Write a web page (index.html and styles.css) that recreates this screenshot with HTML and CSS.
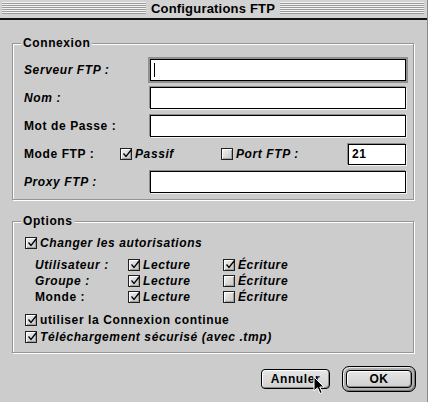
FILE: index.html
```html
<!DOCTYPE html>
<html lang="fr">
<head>
<meta charset="utf-8">
<title>Configurations FTP</title>
<link rel="stylesheet" href="styles.css">
</head>
<body>
<div class="window">
  <div class="titlebar">
    <div class="stripes"></div>
    <div class="title">Configurations FTP</div>
    <div class="stripes"></div>
  </div>
  <div class="content">
    <section class="group connexion">
      <div class="group-title">Connexion</div>
      <div class="row"><span class="lbl it">Serveur FTP :</span><div class="field focus"><span class="caret"></span></div></div>
      <div class="row"><span class="lbl it">Nom :</span><div class="field"></div></div>
      <div class="row"><span class="lbl">Mot de Passe :</span><div class="field"></div></div>
      <div class="row">
        <span class="lbl mode">Mode FTP :</span>
        <span class="check passif"><span class="cb"><svg viewBox="0 0 10 10" width="10" height="10"><path d="M1.5 4.5 L4 7.5 L9.5 0.5" stroke="#000" stroke-width="1.3" fill="none"/></svg></span><span class="it">Passif</span></span>
        <span class="check port"><span class="cb"></span><span class="it">Port FTP :</span></span>
        <div class="field small"><span class="val">21</span></div>
      </div>
      <div class="row"><span class="lbl it">Proxy FTP :</span><div class="field"></div></div>
    </section>

    <section class="group options">
      <div class="group-title">Options</div>
      <div class="orow"><span class="cb"><svg viewBox="0 0 10 10" width="10" height="10"><path d="M1.5 4.5 L4 7.5 L9.5 0.5" stroke="#000" stroke-width="1.3" fill="none"/></svg></span><span class="it">Changer les autorisations</span></div>
      <div class="perms">
        <div class="prow">
          <span class="plbl it">Utilisateur :</span>
          <span class="pcell"><span class="cb"><svg viewBox="0 0 10 10" width="10" height="10"><path d="M1.5 4.5 L4 7.5 L9.5 0.5" stroke="#000" stroke-width="1.3" fill="none"/></svg></span><span class="it">Lecture</span></span>
          <span class="pcell"><span class="cb"><svg viewBox="0 0 10 10" width="10" height="10"><path d="M1.5 4.5 L4 7.5 L9.5 0.5" stroke="#000" stroke-width="1.3" fill="none"/></svg></span><span class="it">Écriture</span></span>
        </div>
        <div class="prow">
          <span class="plbl it">Groupe :</span>
          <span class="pcell"><span class="cb"><svg viewBox="0 0 10 10" width="10" height="10"><path d="M1.5 4.5 L4 7.5 L9.5 0.5" stroke="#000" stroke-width="1.3" fill="none"/></svg></span><span class="it">Lecture</span></span>
          <span class="pcell"><span class="cb"></span><span class="it">Écriture</span></span>
        </div>
        <div class="prow">
          <span class="plbl">Monde :</span>
          <span class="pcell"><span class="cb"><svg viewBox="0 0 10 10" width="10" height="10"><path d="M1.5 4.5 L4 7.5 L9.5 0.5" stroke="#000" stroke-width="1.3" fill="none"/></svg></span><span class="it">Lecture</span></span>
          <span class="pcell"><span class="cb"></span><span class="it">Écriture</span></span>
        </div>
      </div>
      <div class="orow gap7"><span class="cb"><svg viewBox="0 0 10 10" width="10" height="10"><path d="M1.5 4.5 L4 7.5 L9.5 0.5" stroke="#000" stroke-width="1.3" fill="none"/></svg></span><span>utiliser la Connexion continue</span></div>
      <div class="orow gap1"><span class="cb"><svg viewBox="0 0 10 10" width="10" height="10"><path d="M1.5 4.5 L4 7.5 L9.5 0.5" stroke="#000" stroke-width="1.3" fill="none"/></svg></span><span class="it">Téléchargement sécurisé (avec .tmp)</span></div>
    </section>

    <div class="buttons">
      <button class="btn">Annuler</button>
      <span class="default-ring"><button class="btn ok">OK</button></span>
    </div>
  </div>
  <svg class="cursor" width="12" height="19" viewBox="0 0 12 19"><path d="M1 1 L1 15 L4.5 11.8 L7 17.5 L9.2 16.5 L6.8 11 L11 11 Z" fill="#000" stroke="#fff" stroke-width="1"/></svg>
</div>
</body>
</html>
```

FILE: styles.css
```css
html, body {
  margin: 0;
  padding: 0;
}
body {
  width: 428px;
  height: 402px;
  overflow: hidden;
  background: #cccccc;
  font: bold 12px "Liberation Sans", Arial, sans-serif;
  letter-spacing: 0.6px;
  color: #000;
}
.window {
  position: relative;
  height: 402px;
  box-sizing: border-box;
  border-right: 1px solid #8a8a8a;
  display: flex;
  flex-direction: column;
}
.titlebar {
  height: 18px;
  display: flex;
  align-items: flex-start;
  background: #d2d2d2;
  border-bottom: 2px solid #111;
  padding: 0 3px 0 2px;
}
.stripes {
  flex: 1;
  height: 12px;
  margin-top: 2px;
  background: repeating-linear-gradient(to bottom, #f4f4f4 0 1px, #9a9a9a 1px 2px);
}
.title {
  padding: 0 5px;
  line-height: 18px;
  font-size: 13px;
  letter-spacing: 0.2px;
}
.content {
  flex: 1;
  display: flex;
  flex-direction: column;
  padding: 23px 13px 0 12px;
}
.group {
  position: relative;
  border: 1px solid #959595;
  box-shadow: inset 1px 1px 0 #fff, 1px 1px 0 #fff;
  display: flex;
  flex-direction: column;
}
.group-title {
  position: absolute;
  top: -9px;
  left: 8px;
  padding: 0 2px;
  background: #cccccc;
  line-height: 16px;
}
.connexion {
  padding: 15px 7px 6px 11px;
  gap: 6px;
}
.row {
  height: 22px;
  display: flex;
  align-items: center;
}
.lbl {
  width: 126px;
  flex: none;
}
.lbl.mode {
  width: 96px;
}
.it {
  font-style: italic;
}
.field {
  position: relative;
  width: 256px;
  height: 22px;
  box-sizing: border-box;
  background: #fff;
  border: 1px solid #000;
  box-shadow: -1px -1px 0 #8c8c8c, 1px 1px 0 #f4f4f4;
}
.field.focus {
  box-shadow: 0 0 0 2px #909090;
}
.field.small {
  width: 58px;
  height: 21px;
}
.caret {
  position: absolute;
  left: 3px;
  top: 3px;
  width: 1px;
  height: 14px;
  background: #000;
}
.val {
  display: block;
  padding: 2px 0 0 3px;
  line-height: 15px;
}
.check {
  display: flex;
  align-items: center;
}
.check.passif {
  width: 101px;
}
.check.port {
  width: 127px;
}
.cb {
  flex: none;
  width: 12px;
  height: 12px;
  box-sizing: border-box;
  border: 1px solid #202020;
  background: linear-gradient(135deg, #f2f2f2, #c4c4c4);
  box-shadow: inset 1px 1px 0 #fff, inset -1px -1px 0 #a0a0a0;
  display: inline-flex;
  align-items: center;
  justify-content: center;
  margin-right: 3px;
}
.cb svg {
  display: block;
  margin-top: -1px;
  margin-left: 1px;
  overflow: visible;
}
.options {
  margin-top: 21px;
  padding: 13px 7px 7px 12px;
}
.orow {
  height: 16px;
  display: flex;
  align-items: center;
}
.orow.gap7 {
  margin-top: 7px;
}
.orow.gap1 {
  margin-top: 1px;
}
.perms {
  margin-top: 6px;
  padding-left: 10px;
  display: flex;
  flex-direction: column;
}
.prow {
  height: 16px;
  display: flex;
  align-items: center;
}
.plbl {
  width: 93px;
}
.pcell {
  width: 95px;
  display: flex;
  align-items: center;
}
.buttons {
  margin-top: 13px;
  margin-right: -2px;
  display: flex;
  justify-content: flex-end;
  align-items: center;
  gap: 12px;
}
.btn {
  font: bold 12px "Liberation Sans", Arial, sans-serif;
  letter-spacing: 0.6px;
  color: #000;
  width: 69px;
  height: 20px;
  padding: 0;
  border: 1px solid #000;
  border-radius: 4px;
  background: linear-gradient(to bottom, #e6e6e6, #cfcfcf);
  box-shadow: inset 1px 1px 0 #fff, inset -1px -1px 0 #8a8a8a;
}
.default-ring {
  display: flex;
  align-items: center;
  justify-content: center;
  width: 74px;
  height: 26px;
  box-sizing: border-box;
  border: 1px solid #000;
  border-radius: 7px;
  background: #b0b0b0;
  box-shadow: inset 1px 1px 0 #e8e8e8, inset -1px -1px 0 #7a7a7a;
}
.btn.ok {
  width: 66px;
  height: 18px;
  border-radius: 4px;
}
.cursor {
  position: absolute;
  left: 313px;
  top: 376px;
}
```
